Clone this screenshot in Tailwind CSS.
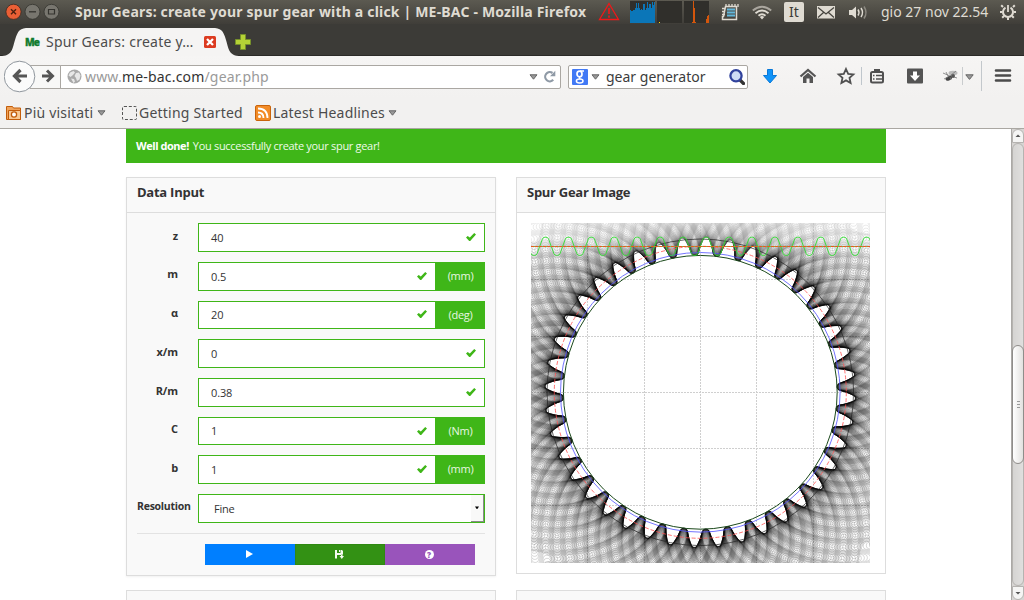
<!DOCTYPE html>
<html lang="it">
<head>
<meta charset="utf-8">
<title>Spur Gears: create your spur gear with a click | ME-BAC</title>
<script src="https://cdn.jsdelivr.net/npm/@tailwindcss/browser@4"></script>
</head>
<body class="w-[1024px] h-[600px] overflow-hidden bg-white flex flex-col font-['Open_Sans',sans-serif] text-[#333]">
<svg class="hidden">
  <symbol id="check" viewBox="0 0 10 8"><path d="M0 4.600 1.700 3 3.800 4.500 8.200 0 10 1.600 4.200 8H3.200Z" fill="#3fb618"/></symbol>
  <symbol id="tri" viewBox="0 0 9 6"><path d="M1 .8h7L4.500 5.200Z" fill="#999" stroke="#666" stroke-width="1"/></symbol>
</svg>

<!-- system panel -->
<header class="h-6 shrink-0 flex items-center bg-linear-to-b from-[#5c5a51] to-[#403e39] font-['Noto_Sans',sans-serif] text-[#dfdbd2] whitespace-nowrap">
  <svg class="w-[66px] h-6 shrink-0" viewBox="0 0 66 24">
    <circle cx="13.500" cy="11.800" r="7.600" fill="#ea5f35" stroke="#3a2a22" stroke-width=".8"/><path d="m11 9.300 5 5m0-5-5 5" stroke="#4a2010" stroke-width="1.400"/>
    <circle cx="32.500" cy="11.800" r="7.500" fill="#78766f" stroke="#34332f" stroke-width=".8"/><path d="M29 11.800h7" stroke="#34332f" stroke-width="1.300"/>
    <circle cx="51.500" cy="11.800" r="7.500" fill="#78766f" stroke="#34332f" stroke-width=".8"/><path d="M48.500 9.500h6v4.500h-6z" fill="none" stroke="#34332f" stroke-width="1.200"/>
  </svg>
  <div class="w-[532px] shrink-0 pl-[9px] text-[14px] font-bold leading-6 tracking-[0.19px]">Spur Gears: create your spur gear with a click | ME-BAC - Mozilla Firefox</div>
  <svg class="w-[280px] h-6 shrink-0" viewBox="598 0 280 24">
    <path d="M609 3.500 618.500 19.500h-19Z" fill="none" stroke="#f01818" stroke-width="1.300"/><path d="M609 8v6M609 15.500v2.200" stroke="#f01818" stroke-width="1.600"/>
    <g shape-rendering="crispEdges"><path d="M630 1h25v22h-25zM657 1h25v22h-25zM684 1h25v22h-25z" fill="#302f2b"/>
    <path d="M630 23V10h1v1h2v-1h2V8h1V3h1v5h1V3h1v5h1v2h1V9h1v1h1V4h2v6h1V8h1V2h1v6h1V4h2v4h1V2h1v3h1V2h1v21Z" fill="#0b76b8"/>
    <path d="M659 22h1v1h-1z" fill="#ffe000"/><path d="M693 1h1v7h1v14h1v1h-4v-1h1zM706 23v-4h1v-3h1v-1h1v8z" fill="#d4560c"/></g>
    <g stroke="#dfdbd2"><path d="M725.500 6.500h11v13h-14v-3h1z" fill="none" stroke-width="1.500"/><path d="M722 8.500h3M722 11.500h3M722 14.500h3M726 4v3M729 4v3M732 4v3M735 4v3M738 4v3" stroke-width="1.300"/></g>
    <path d="M727 9.500h8M727 12.500h8M727 15.500h8" stroke="#63b8dc" stroke-width="1.800"/>
    <g fill="none" stroke-width="1.900"><path d="M752.800 10.500q9.200-7.500 18.400 0" stroke="#aaa69e"/><path d="M755.500 13.200q6.500-5.500 13 0M758.500 15.800q3.500-3 7 0" stroke="#dfdbd2"/></g><path d="m759.800 17 2.200 2.600 2.200-2.600q-2.200-1.800-4.400 0Z" fill="#dfdbd2"/>
    <rect x="784" y="2" width="20" height="20" rx="2" fill="#dfdbd2"/><text x="794" y="17.200" font-size="14" text-anchor="middle" fill="#3c3b37">It</text>
    <rect x="817" y="6" width="18" height="12.500" fill="#dfdbd2"/><path d="m818 7.500 8 6.500 8-6.500M818 17.500l5.500-5M834 17.500l-5.500-5" fill="none" stroke="#45433d" stroke-width="1.200"/>
    <path d="M849 10h3l4-3.500v12L852 15h-3z" fill="#dfdbd2"/><path d="M858 9.500q2 3 0 6M861 8q3 4.500 0 9" fill="none" stroke="#dfdbd2" stroke-width="1.500"/><path d="M864 6.500q4 6 0 12" fill="none" stroke="#8b8880" stroke-width="1.500"/>
  </svg>
  <div class="w-[120px] shrink-0 pl-[3px] text-[14px] leading-6">gio 27 nov 22.54</div>
  <svg class="w-[20px] h-6 shrink-0" viewBox="998 0 20 24"><g fill="none" stroke="#dfdbd2"><path d="M1005.500 7.700a5 5 0 1 0 5 0" stroke-width="2"/><path d="M1008 5v7" stroke-width="1.800"/><path d="M1003 7l-1.800-1.800M1013 7l1.800-1.800M1002.500 12h-2.500M1013.500 12h2.500M1004 16l-1.800 1.800M1012 16l1.800 1.800M1008 17.500v2.500" stroke-width="2"/></g></svg>
</header>

<!-- tab strip -->
<div class="h-8 shrink-0 relative bg-[#3c3b37] border-b border-[#2b2a27]">
  <svg class="absolute left-0 top-0 w-[260px] h-[32px]" viewBox="0 24 260 32">
    <path d="M0 56C12 56 12 50 15 40 18 30 20 28 29 28H212C221 28 223 30 226 40 229 50 229 56 241 56Z" fill="#f5f4f3"/>
    <path d="M240.500 34.500h5v5h5v5h-5v5h-5v-5h-5v-5h5z" fill="#b5d236" stroke="#76902a"/>
    <rect x="204" y="36" width="12" height="12" rx="1.500" fill="#dc3b20"/><path d="m207 39 6 6m0-6-6 6" stroke="#fff" stroke-width="2.300"/>
  </svg>
  <div class="absolute left-[25px] top-[12px] h-[12px] text-[10px] leading-[12px] font-black tracking-[-1px] text-[#127c30] [-webkit-text-stroke:0.3px_#127c30]">Me</div>
  <div class="absolute left-[46px] top-[8px] h-5 text-[14px] leading-5 tracking-[0.25px] text-[#4c4c4c] font-['Noto_Sans',sans-serif] whitespace-nowrap">Spur Gears: create y…</div>
</div>

<!-- navigation -->
<nav class="h-[42px] shrink-0 bg-linear-to-b from-[#f6f5f4] to-[#f2f1f0] flex items-center pl-1 text-[14px] font-['Noto_Sans',sans-serif] text-[#3c3c3c] whitespace-nowrap">
  <svg class="w-[57px] h-[34px] shrink-0 -mr-px" viewBox="4 60 57 34">
    <path d="M30 65.500h31v23H30z" fill="#f8f8f7" stroke="#aaa7a2"/><circle cx="19.500" cy="76.500" r="15.300" fill="#fbfbfb" stroke="#8f969d"/>
    <path d="M27 76H15M20.500 70l-6 6 6 6" fill="none" stroke="#555" stroke-width="3.200"/><path d="M42 76h9M47 70.500l5.500 5.500-5.500 5.500" fill="none" stroke="#555" stroke-width="3"/>
  </svg>
  <div class="w-[501px] h-6 shrink-0 border border-[#aaa7a2] rounded-r-xs bg-white flex items-center pl-[6px] pr-[4px] -mt-px">
    <svg class="w-[15px] h-[15px] mr-[3px]" viewBox="0 0 15 15"><circle cx="7.500" cy="7.500" r="7" fill="#a9a9a9"/><path d="M3 3.500 6.500 2 8 3.500 6 6 3.500 8 1.500 6.500ZM9 4l3-.5 1.500 3-1 4-2.500 1.500L9 9 7.500 7ZM4 9.500l3 .5 1 2.500-1.500 1.500Z" fill="#e7e7e7"/></svg>
    <div class="text-[#9a9a9a] leading-5 grow tracking-[0.18px]">www.<span class="text-[#333]">me-bac.com</span>/gear.php</div>
    <svg class="w-[9px] h-[6px] mr-[5px]"><use href="#tri"/></svg>
    <svg class="w-[13px] h-[13px]" viewBox="0 0 13 13"><path d="M10.200 9.800A4.600 4.600 0 1 1 9.500 3" fill="none" stroke="#8f9aa6" stroke-width="2.200"/><path d="M12.300.8v5.400H7Z" fill="#8f9aa6"/></svg>
  </div>
  <div class="w-[180px] h-6 ml-[7px] shrink-0 border border-[#aaa7a2] rounded-xs bg-white flex items-center pl-[3px] pr-[2px] -mt-px">
    <svg class="w-4 h-4 shrink-0" viewBox="0 0 16 16"><rect width="16" height="16" rx="1" fill="#4179f5"/><g fill="none" stroke="#fff"><ellipse cx="7.500" cy="5" rx="2.500" ry="2.900" stroke-width="1.700"/><path d="M8 2h4M8 7.800q-1.500 1.200.3 2.200" stroke-width="1.300"/><ellipse cx="7.700" cy="12" rx="3.300" ry="2" stroke-width="1.500"/></g></svg>
    <svg class="w-[9px] h-[6px] ml-[3px] mr-[6px]"><use href="#tri"/></svg>
    <div class="grow leading-5">gear generator</div>
    <svg class="w-4 h-4" viewBox="0 0 16 16"><path d="m11 11 3.500 3.500" stroke="#333" stroke-width="3.200" stroke-linecap="round"/><circle cx="7" cy="6.800" r="5.600" fill="#cfdcf6" stroke="#31429c" stroke-width="2.300"/></svg>
  </div>
  <svg class="w-[275px] h-[42px] shrink-0" viewBox="748 56 275 42">
    <path d="M767.500 69.500h5v6h4L770 83l-6.500-7.500h4z" fill="#0f93f8" stroke="#0878d8"/>
    <path d="M800.500 76.500 808 70l7.500 6.500" fill="none" stroke="#555" stroke-width="2.200"/><path d="M803 77l5-4.300 5 4.300v6h-3.500v-4.500h-3V83H803z" fill="#555"/>
    <path d="m846 69 2.200 4.800 5.200.6-3.900 3.500 1.100 5.100-4.600-2.600-4.600 2.600 1.100-5.100-3.900-3.500 5.200-.6z" fill="none" stroke="#505050" stroke-width="1.800"/>
    <path d="M861.500 67v18" stroke="#bfc6cc"/><g fill="none" stroke="#505050"><rect x="871" y="72" width="12" height="10.500" rx="1.500" stroke-width="2"/><path d="M873 75.500h1.500m1.500 0h6M873 79h1.500m1.500 0h6" stroke-width="1.500"/><path d="M874 70.500h6" stroke-width="3"/></g>
    <rect x="907" y="68.500" width="16" height="15" rx="1" fill="#545454"/><path d="M913 71.500h4v4h3L915 81l-5-5.500h3z" fill="#fff"/>
    <g transform="translate(950 75)"><ellipse cx="3" cy="-2" rx="4.500" ry="2.200" fill="#bbb"/><ellipse cx="-2.500" cy="2.500" rx="3.400" ry="2" transform="rotate(-25)" fill="#444"/><circle cx="3" cy="1" r="2" fill="#555"/><path d="M-7-2 0 1 6-4M-6 4-2 2M4 2l3 1M-2 1-4-3M0 2l1 3" stroke="#777" fill="none" stroke-width=".8"/></g>
    <path d="M962.500 67v18" stroke="#c9ccce"/><path d="M965.800 74.800h7.400l-3.700 4.600z" fill="#999" stroke="#666"/><path d="M981.500 61v30" stroke="#c3c8cc"/>
    <path d="M996 70.500h14M996 75.500h14M996 80.500h14" stroke="#4b4b4b" stroke-width="2.600" stroke-linecap="round"/>
  </svg>
</nav>

<!-- bookmarks -->
<div class="h-[31px] shrink-0 bg-[#f2f1f0] border-b border-[#aaa7a2] flex items-center pl-[6px] text-[14px] leading-5 font-['Noto_Sans',sans-serif] text-[#4c4c4c] whitespace-nowrap">
  <svg class="w-4 h-4 shrink-0" viewBox="0 0 16 16"><path d="M.5 1.500h6l1 1.500h7v11.500H.5z" fill="#f0a35a" stroke="#c25d0b"/><path d="M2.500 5.500h12v9h-12z" fill="#f8c892" stroke="#c25d0b"/><circle cx="8" cy="9.500" r="2.600" fill="#fff" stroke="#c25d0b" stroke-width="1.300"/></svg>
  <div class="w-[73px] pl-[2px] tracking-[0.2px]">Più visitati</div>
  <svg class="w-[9px] h-[6px] ml-[2px]"><use href="#tri"/></svg>
  <div class="w-[15px] h-[14px] ml-[16px] border border-dashed border-[#555] rounded-xs"></div>
  <div class="w-[118px] pl-[2px] tracking-[0.22px]">Getting Started</div>
  <svg class="w-4 h-4 shrink-0" viewBox="0 0 16 16"><rect x=".5" y=".5" width="15" height="15" rx="1.500" fill="#f28c28" stroke="#c9640c"/><circle cx="4.500" cy="11.500" r="1.500" fill="#fff"/><path d="M3 7.500q5.500 0 5.500 5.500M3 3.500q9.500 0 9.500 9.500" fill="none" stroke="#fff" stroke-width="1.800"/></svg>
  <div class="w-[115px] pl-[2px] tracking-[0.2px]">Latest Headlines</div>
  <svg class="w-[9px] h-[6px] ml-[2px]"><use href="#tri"/></svg>
</div>

<!-- page and its scroll bar -->
<div class="h-[471px] shrink-0 flex">
  <main class="w-[1011px] pl-[126px] overflow-hidden text-[11px]">
    <div class="w-[760px] h-[34px] bg-[#3fb618] text-white flex items-center pl-[10px] gap-[4px] leading-4"><b class="tracking-[-0.45px]">Well done!</b><span class="tracking-[-0.31px] text-[#eefae9]">You successfully create your spur gear!</span></div>
    <div class="flex gap-5 mt-[14px] items-start">
      <section class="w-[370px] h-[399px] border border-[#ddd] bg-[#f9f9f9] shadow-[0_1px_2px_rgba(0,0,0,0.06)]">
        <h2 class="h-[35px] border-b border-[#ddd] pl-[10px] pt-[5px] text-[13px] leading-[19px] font-bold tracking-[-0.25px]">Data Input</h2>
        <form class="px-[10px] pt-[10.250px]">
          <div id="rows" class="flex flex-col gap-[10px]"></div>
          <div class="flex mt-[10px] h-[28.700px]">
            <label class="w-[61px] pt-[4px] leading-4 font-bold whitespace-nowrap text-[10.500px] tracking-[-0.25px]">Resolution</label>
            <div class="grow border border-[#3fb618] bg-white flex items-center pl-[15px]">
              <span class="grow pt-px tracking-[-0.2px]">Fine</span>
              <div class="w-[13px] h-full bg-[#f9f9f8] border-r border-b border-[#888] flex items-center justify-center"><div class="w-[4px] h-[3px] bg-black [clip-path:polygon(0_0,100%_0,50%_100%)]"></div></div>
            </div>
          </div>
          <div class="mt-[10px] h-px bg-[#e3e3e3]"></div>
          <div class="flex mt-[10px] ml-[68px] h-[21px]">
            <div class="w-[90px] bg-[#007fff] flex items-center justify-center"><svg class="w-[7px] h-[8px] -ml-px" viewBox="0 0 7 8"><path d="M0 0 7 4 0 8Z" fill="#fff"/></svg></div>
            <div class="w-[90px] bg-[#339114] border border-[#2f8912] flex items-center justify-center"><svg class="w-[9px] h-[9px] -ml-[2px]" viewBox="0 0 9 9"><path d="M0 0h2v3h3.500V0H7l1 1v3.500H6V5H2v3.500H0z" fill="#f4fbf1"/><path d="M4 0h1v2H4z" fill="#f4fbf1"/><path d="M6 4.500h1.500V6H9L6.800 9 4.500 6H6z" fill="#f4fbf1"/></svg></div>
            <div class="w-[90px] bg-[#9954bb] flex items-center justify-center"><div class="w-[9px] h-[9px] -ml-[2px] rounded-full bg-white text-[#9954bb] text-[8px] leading-[9px] font-black text-center">?</div></div>
          </div>
        </form>
      </section>
      <section class="w-[370px] h-[397px] border border-[#ddd] bg-white">
        <h2 class="h-[35px] border-b border-[#ddd] bg-[#f9f9f9] pl-[10px] pt-[5px] text-[13px] leading-[19px] font-bold tracking-[-0.28px]">Spur Gear Image</h2>
        <canvas id="gear" width="339" height="340" class="ml-[14px] mt-[10px] block"></canvas>
      </section>
    </div>
    <div class="flex gap-5 mt-[14px]">
      <div class="w-[370px] h-5 border border-[#ddd] bg-[#f9f9f9]"></div>
      <div class="w-[370px] h-5 border border-[#ddd] bg-[#f9f9f9]"></div>
    </div>
  </main>
  <aside class="w-[13px] bg-[#d6d4d2] border-l border-[#aba9a6] flex flex-col items-center">
    <div class="w-[12px] h-[14px] bg-[#f5f5f4] rounded-t-full border border-[#b5b3b0] flex items-center justify-center"><div class="w-[6px] h-[3px] bg-[#555] [clip-path:polygon(50%_0,100%_100%,0_100%)]"></div></div>
    <div class="w-[12px] h-[444px] bg-linear-to-r from-[#d5d4d2] to-[#e0dfde] rounded-full border border-[#b5b3b0]">
      <div class="-ml-px mt-[201px] w-[12px] h-[119px] rounded-full border border-[#8f8d8a] bg-linear-to-r from-white to-[#e2e1df] flex flex-col gap-[2px] items-center justify-center"><i class="w-[3px] h-px bg-[#999]"></i><i class="w-[3px] h-px bg-[#999]"></i><i class="w-[3px] h-px bg-[#999]"></i></div>
    </div>
    <div class="w-[12px] h-[14px] bg-[#f5f5f4] rounded-b-full border border-[#b5b3b0] flex items-center justify-center"><div class="w-[6px] h-[3px] bg-[#555] [clip-path:polygon(0_0,100%_0,50%_100%)]"></div></div>
  </aside>
</div>

<script>
  // parameter rows
  const rows = [['z','40',''],['m','0.5','(mm)'],['α','20','(deg)'],['x/m','0',''],['R/m','0.38',''],['C','1','(Nm)'],['b','1','(mm)']];
  document.getElementById('rows').innerHTML = rows.map(([n, v, u]) => `
    <div class="flex h-[28.700px]">
      <label class="w-[61px] pr-[20px] pt-[4.500px] text-right font-bold leading-4 tracking-[-0.1px]">${n}</label>
      <div class="grow border border-[#3fb618] bg-white flex items-center pl-[12px] pr-[8.500px]"><span class="grow pt-px tracking-[-0.15px]">${v}</span><svg class="w-[10px] h-[8px] -mt-px"><use href="#check"/></svg></div>
      ${u ? `<div class="w-[49px] bg-[#3fb618] text-[#e8f6e3] flex items-center justify-center tracking-[-0.3px]">${u}</div>` : ''}
    </div>`).join('');

  // gear envelope: a rack cutter rolling round the pitch circle
  const c = document.getElementById('gear').getContext('2d');
  const CX = 169.3, CY = 169.3, M = 7.3, Z = 40, R = M * Z / 2, P = Math.PI * M, H = 1.25 * M, T = Math.tan(Math.PI / 9) * H;
  function rack(half) {
    const p = new Path2D();
    p.moveTo(-half * P - P / 4, 0);
    for (let i = -half; i <= half; i++) {
      const x = i * P, q = P / 4;
      p.arcTo(x - q + T, -H, x, -H, 2.8);
      p.arcTo(x + q - T, -H, x + q, 0, 2.8);
      p.lineTo(x + q, 0);
      p.arcTo(x + q + T, H, x + 2 * q, H, 2.8);
      p.arcTo(x + 3 * q - T, H, x + 3 * q, 0, 2.8);
      p.lineTo(x + 3 * q, 0);
    }
    return p;
  }
  c.fillStyle = '#fff'; c.fillRect(0, 0, 339, 340);
  // grid
  c.strokeStyle = '#cfcfcf'; c.lineWidth = 1; c.setLineDash([2, 1]);
  for (let i = -2; i <= 2; i++) {
    const g = Math.round(169 + i * 56.4) + .5;
    c.beginPath(); c.moveTo(g, 0); c.lineTo(g, 340); c.moveTo(0, g); c.lineTo(339, g); c.stroke();
  }
  c.setLineDash([]);
  const cutter = rack(8), STEPS = 360;
  c.lineWidth = 0.6;
  for (let k = 0; k < STEPS; k++) {
    const a = 2 * Math.PI * k / STEPS;
    let s = (R * a) % P; if (s > P / 2) s -= P;
    c.save(); c.translate(CX, CY); c.rotate(a); c.translate(-s + P / 4, -R);
    const g = c.createRadialGradient(s - P / 4, R, R - H, s - P / 4, R, 235);
    g.addColorStop(0, 'rgba(0,0,0,.36)'); g.addColorStop(.25, 'rgba(0,0,0,.26)'); g.addColorStop(1, 'rgba(0,0,0,.24)');
    c.strokeStyle = g; c.stroke(cutter); c.restore();
  }
  const w = c.createLinearGradient(0, 0, 0, 36);
  w.addColorStop(0, 'rgba(255,255,255,.5)'); w.addColorStop(.4, 'rgba(255,255,255,.4)'); w.addColorStop(1, 'rgba(255,255,255,0)');
  c.fillStyle = w; c.fillRect(0, 0, 339, 36);

  const ring = (r, col, w, d) => { c.beginPath(); c.setLineDash(d || []); c.lineWidth = w; c.strokeStyle = col; c.arc(CX, CY, r, 0, 7); c.stroke(); c.setLineDash([]); };
  ring(R + M, '#222', .7); ring(R, '#ff5050', .8, [4, 2]); ring(139.8, '#5050ff', .8); ring(R - H, '#1c4a1c', 1);
  c.save(); c.translate(CX + P / 4, CY - R); c.strokeStyle = '#30e030'; c.lineWidth = .9; c.stroke(rack(8)); c.restore();
  c.lineWidth = 1; c.strokeStyle = '#70c040'; c.beginPath(); c.moveTo(0, 23.5); c.lineTo(339, 23.5); c.stroke();
  c.strokeStyle = '#e85a20'; c.setLineDash([3, 1]); c.stroke();
</script>
</body>
</html>
